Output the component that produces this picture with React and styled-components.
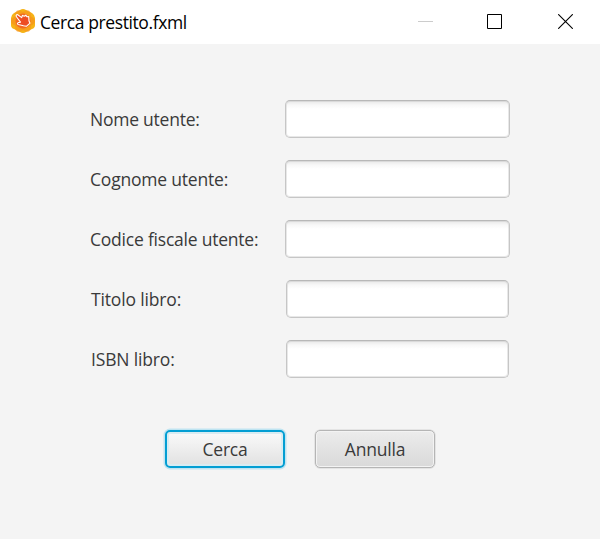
import React from "react";
import styled, { createGlobalStyle } from "styled-components";

const GlobalStyle = createGlobalStyle`
  * { box-sizing: border-box; }
  body {
    margin: 0;
    overflow: hidden;
    font-family: "Open Sans", "Noto Sans", sans-serif;
  }
`;

const Window = styled.div`
  width: 600px;
  height: 539px;
  display: flex;
  flex-direction: column;
  background: #f4f4f4;
`;

const TitleBar = styled.header`
  height: 44px;
  flex: none;
  display: flex;
  align-items: center;
  padding-left: 10px;
  background: #fff;
`;

const AppIcon = styled.svg`
  width: 26px;
  height: 26px;
  flex: none;
  margin-top: -2px;
`;

const Title = styled.h1`
  margin: 0 auto 0 4px;
  font-size: 17.5px;
  font-weight: 400;
  line-height: 24px;
  letter-spacing: ${({ $tracking }) => $tracking}px;
  color: #000;
  white-space: nowrap;
`;

const Controls = styled.div`
  display: flex;
  height: 44px;
`;

const ControlButton = styled.button`
  width: ${({ $width }) => $width}px;
  padding: 0;
  border: 0;
  background: none;
  display: flex;
  align-items: center;
  justify-content: center;
  color: ${({ disabled }) => (disabled ? "#ccc" : "#000")};

  svg {
    display: block;
    width: 15px;
    height: 15px;
    margin-top: -1px;
  }
`;

const Form = styled.form`
  display: flex;
  flex-direction: column;
  padding-top: 56px;
`;

const Fields = styled.div`
  display: flex;
  flex-direction: column;
  gap: 22px;
`;

const Field = styled.label`
  height: 38px;
  display: grid;
  grid-template-columns: 195px 225px;
  padding-left: 90px;
  align-items: center;
`;

const Caption = styled.span`
  padding-left: ${({ $inset }) => $inset}px;
  font-size: 17.5px;
  font-weight: 400;
  line-height: 24px;
  letter-spacing: ${({ $tracking }) => $tracking}px;
  color: #3a3a3a;
  white-space: nowrap;
`;

const TextInput = styled.input`
  width: ${({ $narrow }) => ($narrow ? 223 : 225)}px;
  justify-self: center;
  height: 38px;
  padding: 0 10px;
  border: 1px solid #c6c6c6;
  border-top-color: #b8b8b8;
  border-radius: 5px;
  outline: 0;
  background: linear-gradient(#e8e8e8, #f8f8f8 4px, #fff 8px);
  box-shadow: inset 0 0 0 1px rgba(190, 190, 190, 0.35);
  font: 17.5px "Open Sans", sans-serif;
`;

const Actions = styled.div`
  display: flex;
  gap: 30px;
  margin: 52px 0 0 165px;
`;

const Button = styled.button`
  width: 120px;
  height: 38px;
  padding: 0;
  border: ${({ $primary }) => ($primary ? "2px solid #039ed3" : "1px solid #b5b5b5")};
  border-radius: 5px;
  background: ${({ $primary }) =>
    $primary ? "linear-gradient(#fafafa, #e1e1e1)" : "linear-gradient(#ececec, #d9d9d9)"};
  box-shadow: ${({ $primary }) =>
    $primary
      ? "0 0 0 1.5px #bfe4f1, inset 0 0 0 2px #d8ecf2"
      : "inset 0 0 0 1px #f3f3f3, 0 0 0 0.5px #d3d3d3"};
  font: 400 17.5px/24px "Open Sans", "Noto Sans", sans-serif;
  letter-spacing: ${({ $tracking }) => $tracking}px;
  color: #3a3a3a;
`;

const fields = [
  { label: "Nome utente:", tracking: -0.24, inset: 0 },
  { label: "Cognome utente:", tracking: -0.2, inset: 0 },
  { label: "Codice fiscale utente:", tracking: -0.22, inset: 0 },
  { label: "Titolo libro:", tracking: -0.15, inset: 1, narrow: true },
  { label: "ISBN libro:", tracking: -0.15, inset: 1, narrow: true },
];

function SceneIcon() {
  return (
    <AppIcon viewBox="0 0 26 26" aria-hidden="true">
      <path d="M10 2 Q13 0 16 2 L22 5 Q25 7 25 10 V17 Q25 20 22 21 L16 24 Q13 26 10 24 L4 21 Q1 20 1 17 V10 Q1 7 4 5Z" fill="#f6b317" />
      <ellipse cx="13" cy="13" rx="12" ry="6" fill="#f6961d" fillOpacity=".8" />
      <ellipse cx="13" cy="13" rx="12" ry="6" transform="rotate(60 13 13)" fill="#f7931e" fillOpacity=".6" />
      <ellipse cx="13" cy="13" rx="12" ry="6" transform="rotate(120 13 13)" fill="#f7931e" fillOpacity=".6" />
      <circle cx="13" cy="13" r="7.5" fill="#f36b21" />
      <path d="M6.3 7.2 Q7.2 6.2 8.4 7.2 L11.7 9.6 L12.5 7.4 L14.3 8.2 L15.8 7.2 L17 8.8 L18.7 8.5 L19 13 L20 15.2 L16.3 18.3 L13.5 17.8 L8.2 16.5 Q6.6 15.6 8.2 14.6 L10.5 14.2 L6.6 9 Q5.7 8 6.3 7.2Z" fill="#ed4c23" stroke="#fff" strokeWidth="1.1" strokeLinejoin="round" />
    </AppIcon>
  );
}

export default function App() {
  return (
    <>
      <GlobalStyle />
      <Window>
        <TitleBar>
          <SceneIcon />
          <Title $tracking={-0.4}>Cerca prestito.fxml</Title>
          <Controls>
            <ControlButton disabled $width={65} aria-label="Riduci a icona">
              <svg viewBox="0 0 15 15"><path d="M0 7.5H15" stroke="currentColor" /></svg>
            </ControlButton>
            <ControlButton $width={73} aria-label="Ingrandisci">
              <svg viewBox="0 0 15 15"><path d="M.5.5H14.5V14.5H.5Z" fill="none" stroke="currentColor" /></svg>
            </ControlButton>
            <ControlButton $width={69} aria-label="Chiudi">
              <svg viewBox="0 0 15 15"><path d="M.2.2L14.8 14.8M14.8.2L.2 14.8" stroke="currentColor" strokeWidth="1.1" /></svg>
            </ControlButton>
          </Controls>
        </TitleBar>
        <Form>
          <Fields>
            {fields.map((f) => (
              <Field key={f.label}>
                <Caption $tracking={f.tracking} $inset={f.inset}>{f.label}</Caption>
                <TextInput type="text" $narrow={f.narrow} />
              </Field>
            ))}
          </Fields>
          <Actions>
            <Button type="button" $primary $tracking={-0.22}>Cerca</Button>
            <Button type="button" $tracking={-0.2}>Annulla</Button>
          </Actions>
        </Form>
      </Window>
    </>
  );
}
